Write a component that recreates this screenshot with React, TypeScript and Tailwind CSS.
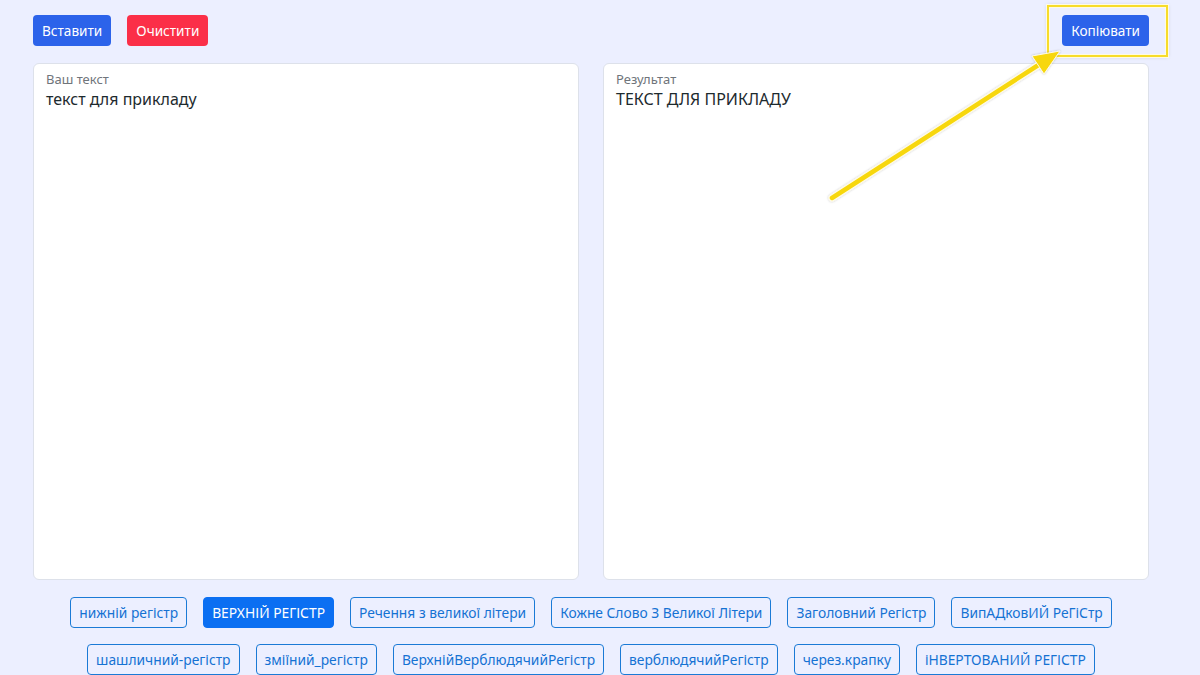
import React from "react";

const row1 = [
  "нижній регістр",
  "ВЕРХНІЙ РЕГІСТР",
  "Речення з великої літери",
  "Кожне Слово З Великої Літери",
  "Заголовний Регістр",
  "ВипАДковИЙ РеГіСтр",
];
const row2 = [
  "шашличний-регістр",
  "зміїний_регістр",
  "ВерхнійВерблюдячийРегістр",
  "верблюдячийРегістр",
  "через.крапку",
  "іНВЕРТОВАНИЙ РЕГІСТР",
];

function CaseBtn({ label }: { label: string }) {
  const active = label === "ВЕРХНІЙ РЕГІСТР";
  return (
    <button
      className={
        active
          ? "h-[31px] px-[8px] rounded-[4px] border border-[#0b6ff2] bg-[#0b6ff2] text-white text-[13.8px] leading-none whitespace-nowrap"
          : "h-[31px] px-[8px] rounded-[4px] border border-[#1a7ad6] bg-transparent text-[#1572d3] text-[13.8px] leading-none whitespace-nowrap"
      }
    >
      {label}
    </button>
  );
}

export default function App() {
  return (
    <div
      className="relative min-h-[675px] bg-[#ecefff] overflow-hidden"
      style={{ fontFamily: '"Noto Sans", "Open Sans", sans-serif' }}
    >
      <div className="ml-[33px] w-[1116px] pt-[15px]">
        <div className="flex items-center justify-between">
          <div className="flex gap-4">
            <button className="h-[31px] px-[9px] rounded-[4px] bg-[#2c63ea] text-white text-[13.6px] leading-none">
              Вставити
            </button>
            <button className="h-[31px] px-[9px] rounded-[4px] bg-[#fb2f48] text-white text-[13.6px] leading-none">
              Очистити
            </button>
          </div>
          <div className="relative">
            <button className="h-[31px] px-[9px] rounded-[4px] bg-[#2c63ea] text-white text-[13.6px] leading-none">
              Копіювати
            </button>
            <div className="absolute -left-[15px] -top-[10px] -right-[19px] -bottom-[11px] border-2 border-[#f7dc2a] shadow-[0_0_0_1px_#fffbe0,inset_0_0_0_1px_#fffbe0,0_0_4px_rgba(0,0,0,0.15)] pointer-events-none" />
          </div>
        </div>

        <div className="mt-[17px] grid grid-cols-2 gap-6">
          <div className="h-[517px] rounded-[6px] border border-[#dde1ea] bg-white px-3 pt-[7px]">
            <div className="text-[13px] text-[#70757b] leading-[16px]">Ваш текст</div>
            <div className="text-[16px] text-[#1d2a2e] leading-[22px] mt-[1px]">текст для прикладу</div>
          </div>
          <div className="h-[517px] rounded-[6px] border border-[#dde1ea] bg-white px-3 pt-[7px]">
            <div className="text-[13px] text-[#70757b] leading-[16px]">Результат</div>
            <div className="text-[16px] text-[#1d2a2e] leading-[22px] mt-[1px]">ТЕКСТ ДЛЯ ПРИКЛАДУ</div>
          </div>
        </div>

        <div className="mt-[17px] flex flex-col items-center gap-4">
          <div className="flex gap-4 justify-center">
            {row1.map((l) => (
              <CaseBtn key={l} label={l} />
            ))}
          </div>
          <div className="flex gap-4 justify-center">
            {row2.map((l) => (
              <CaseBtn key={l} label={l} />
            ))}
          </div>
        </div>
      </div>

      <svg
        className="absolute left-0 top-0 pointer-events-none"
        width="1200"
        height="675"
        viewBox="0 0 1200 675"
      >
        <defs>
          <filter id="sh" x="-10%" y="-10%" width="120%" height="120%">
            <feDropShadow dx="0" dy="0" stdDeviation="1.2" floodColor="#000" floodOpacity="0.25" />
          </filter>
        </defs>
        <g filter="url(#sh)">
          <line x1="832" y1="198" x2="1040" y2="64" stroke="#fffbe6" strokeWidth="7" strokeLinecap="round" />
          <line x1="832" y1="198" x2="1040" y2="64" stroke="#f7d70c" strokeWidth="4.5" strokeLinecap="round" />
          <polygon points="1060,51 1032,56 1044,74" fill="#f7d70c" stroke="#fffbe6" strokeWidth="1" strokeLinejoin="round" />
        </g>
      </svg>
    </div>
  );
}
